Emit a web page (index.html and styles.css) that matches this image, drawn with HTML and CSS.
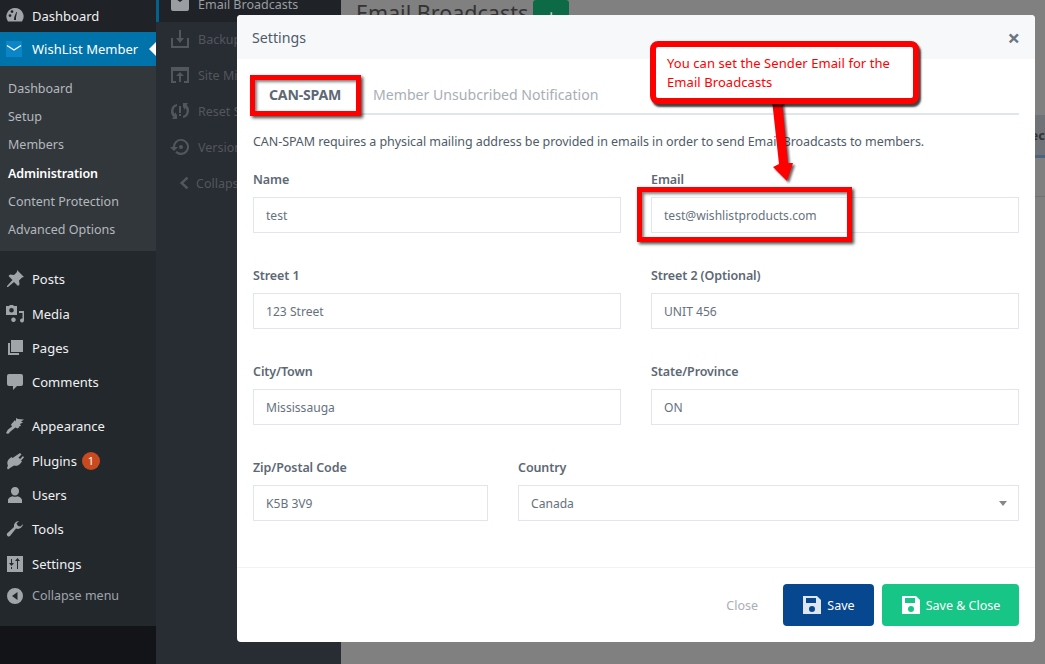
FILE: index.html
```html
<!DOCTYPE html>
<html lang="en">
<head>
    <meta charset="UTF-8">
    <title>Email Broadcasts</title>
    <link rel="stylesheet" href="styles.css">
</head>
<body>
    <div class="admin">
        <nav class="sidebar">
            <div class="menu-top">
                <a class="menu-item"><svg class="menu-icon" viewBox="0 0 20 20"><path d="M10 2a8.500 8.500 0 0 0-7 13.400h14A8.500 8.500 0 0 0 10 2zM5 11a1.400 1.400 0 1 1 0-2.800 1.400 1.400 0 0 1 0 2.800zm2-4a1.400 1.400 0 1 1 0-2.800A1.400 1.400 0 0 1 7 7zm4 7H9l.3-3 2-5 .7.300-1 5z" fill-rule="evenodd"/></svg><span>Dashboard</span></a>
            </div>
            <a class="menu-current"><svg class="wl-icon" viewBox="0 0 16 16"><rect width="16" height="16" fill="#0a86c8"/><path d="M1 4.500l7 4.500 7-4.500" fill="none" stroke="#fff" stroke-width="1.300"/></svg><span>WishList Member</span></a>
            <div class="submenu">
                <a>Dashboard</a>
                <a>Setup</a>
                <a>Members</a>
                <a class="sub-active">Administration</a>
                <a>Content Protection</a>
                <a>Advanced Options</a>
            </div>
            <div class="menu-group">
                <a class="menu-item"><svg class="menu-icon" viewBox="0 0 20 20"><path d="M12 1l7 7-2 .5-3 3 .5 4-1.500 1.500-4-4L3 18l-1 0 0-1 5.500-6-4-4L5 5.500l4 .5 3-3z"/></svg><span>Posts</span></a>
                <a class="menu-item"><svg class="menu-icon" viewBox="0 0 20 20"><path d="M1 2h3l1-1h3l1 1h3v9H1zm5.500 2a2.300 2.300 0 1 0 0 4.600 2.300 2.300 0 0 0 0-4.600zM14 7h5v9.500a2 2 0 1 1-1.500-2V9H14zM8 13.500a2.300 2.300 0 1 1 0 4.500 2.300 2.300 0 0 1 0-4.500z" fill-rule="evenodd"/></svg><span>Media</span></a>
                <a class="menu-item"><svg class="menu-icon" viewBox="0 0 20 20"><path d="M6 2h12v12H6zM3 5h2v10h9v2H3z"/></svg><span>Pages</span></a>
                <a class="menu-item"><svg class="menu-icon" viewBox="0 0 20 20"><path d="M4 2h12a2 2 0 0 1 2 2v8a2 2 0 0 1-2 2h-4l-4 4v-4H4a2 2 0 0 1-2-2V4a2 2 0 0 1 2-2z"/></svg><span>Comments</span></a>
            </div>
            <div class="menu-group menu-group-b">
                <a class="menu-item"><svg class="menu-icon" viewBox="0 0 20 20"><path d="M11 2l2 1 6 .5-3 2 2 1-3 1.500 1 2-5 .5zM10 4l4.500 7-2 1.500-2-1L6 15l-3 3-2-1 2-3.500 4-3-1-2z"/></svg><span>Appearance</span></a>
                <a class="menu-item"><svg class="menu-icon" viewBox="0 0 20 20"><path d="M15 2l1.500 1.500-3 3L15 8l3-3 1 1.500-3 3 1 1-2 2.500c-2 2-4.500 2-6 1.500L5 17l-2 1.500L2 17l1-2.500-.5-1c-.5-2 0-4 1.500-5.500L6.500 6l1 1z"/></svg><span>Plugins</span><span class="badge">1</span></a>
                <a class="menu-item"><svg class="menu-icon" viewBox="0 0 20 20"><path d="M10 2a4 4 0 0 1 4 4.500c0 2-1.800 4-4 4s-4-2-4-4A4 4 0 0 1 10 2zM3 15c0-2 3-3.500 4.500-3.800 1.500.8 3.500.8 5 0C14 11.500 17 13 17 15v3H3z"/></svg><span>Users</span></a>
                <a class="menu-item"><svg class="menu-icon" viewBox="0 0 20 20"><path d="M18 5a5 5 0 0 1-7 4.500L5 17a2 2 0 0 1-3-2.500l7-6.500A5 5 0 0 1 14 2l-2.500 2.500L13 7l2.500.5L18 5z"/></svg><span>Tools</span></a>
                <a class="menu-item"><svg class="menu-icon" viewBox="0 0 20 20"><path d="M2 2h16v16H2zm4 3v4H4l2.500 3L9 9H7V5zm0 8v2h1v-2zm6-6v8h1V7h2l-2.500-3L10 7zm-6 0" fill-rule="evenodd"/></svg><span>Settings</span></a>
                <a class="menu-item menu-collapse"><svg class="menu-icon" viewBox="0 0 20 20"><path d="M10 2a8 8 0 1 1 0 16 8 8 0 0 1 0-16zm2.500 4L7 10l5.500 4z" fill-rule="evenodd"/></svg><span>Collapse menu</span></a>
            </div>
        </nav>

        <aside class="flyout">
            <a class="fly-item fly-current"><svg viewBox="0 0 20 20"><path d="M1 1h18v16a2 2 0 0 1-2 2H3a2 2 0 0 1-2-2zm1 3l8 6 8-6V1H2z" fill-rule="evenodd"/></svg><span>Email Broadcasts</span></a>
            <a class="fly-item"><svg viewBox="0 0 20 20"><path d="M9 1h2v8h3l-4 5-4-5h3zM1 9h2v8h14V9h2v10H1z"/></svg><span>Backup</span></a>
            <a class="fly-item"><svg viewBox="0 0 20 20"><path d="M1 2h18v16h-5v-2h3V6H3v10h3v2H1zm9 5l4 4h-3v6H9v-6H6z"/></svg><span>Site Migration</span></a>
            <a class="fly-item"><svg viewBox="0 0 20 20"><path d="M9 5h2v7H9zm0 8h2v2H9zM1 10a7 7 0 0 1 6-7v2a5 5 0 0 0-2 8.500V11l2 3v4H2l1.500-2A7 7 0 0 1 1 10zm18 0a7 7 0 0 1-6 7v-2a5 5 0 0 0 2-8.500V9l-2-3V2h5l-1.500 2A7 7 0 0 1 19 10z"/></svg><span>Reset Settings</span></a>
            <a class="fly-item"><svg viewBox="0 0 20 20"><path d="M11 2a8 8 0 1 1-5.700 13.600l1.500-1.500A6 6 0 1 0 5 10h3l-4 4-4-4h3a8 8 0 0 1 8-8zm0 6a2 2 0 1 1 0 4 2 2 0 0 1 0-4z"/></svg><span>Version</span></a>
            <a class="fly-item fly-collapse"><svg viewBox="0 0 20 20"><path d="M14 3l2 2-5.500 5 5.500 5-2 2-7.500-7z"/></svg><span>Collapse</span></a>
        </aside>

        <main class="content">
            <div class="page-title"><h2>Email Broadcasts</h2><span class="add-button">+</span></div>
            <div class="table-head"><span>Rec</span></div>
            <div class="table-line"></div>
        </main>
    </div>

    <section class="modal">
        <header class="modal-head">
            <span class="modal-title">Settings</span>
            <span class="modal-close">&times;</span>
        </header>
        <div class="modal-body">
            <div class="tabs">
                <span class="tab tab-on">CAN-SPAM</span>
                <span class="tab">Member Unsubcribed Notification</span>
            </div>
            <p class="intro">CAN-SPAM requires a physical mailing address be provided in emails in order to send Email Broadcasts to members.</p>
            <div class="form-row">
                <div class="field"><label>Name</label><div class="input">test</div></div>
                <div class="field"><label>Email</label><div class="input">test@wishlistproducts.com</div></div>
            </div>
            <div class="form-row">
                <div class="field"><label>Street 1</label><div class="input">123 Street</div></div>
                <div class="field"><label>Street 2 (Optional)</label><div class="input">UNIT 456</div></div>
            </div>
            <div class="form-row">
                <div class="field"><label>City/Town</label><div class="input">Mississauga</div></div>
                <div class="field"><label>State/Province</label><div class="input">ON</div></div>
            </div>
            <div class="form-row form-row-last">
                <div class="field"><label>Zip/Postal Code</label><div class="input">K5B 3V9</div></div>
                <div class="field"><label>Country</label><div class="input input-select">Canada<i class="caret"></i></div></div>
            </div>
        </div>
        <footer class="modal-foot">
            <span class="btn-close">Close</span>
            <span class="btn btn-blue"><svg viewBox="0 0 20 20"><path d="M1 1h14l4 4v14H1zm3 2v5h10V3zm6 8a3 3 0 1 0 0 6 3 3 0 0 0 0-6z" fill="#dfe6f0" fill-rule="evenodd"/></svg>Save</span>
            <span class="btn btn-green"><svg viewBox="0 0 20 20"><path d="M1 1h14l4 4v14H1zm3 2v5h10V3zm6 8a3 3 0 1 0 0 6 3 3 0 0 0 0-6z" fill="#fff" fill-rule="evenodd"/></svg>Save &amp; Close</span>
        </footer>
    </section>

    <!-- red annotations drawn over the screenshot -->
    <div class="mark mark-tab"></div>
    <div class="mark mark-email"></div>
    <svg class="arrow" viewBox="0 0 35 85"><path d="M7 0h10l6 63 5 0-6 18L8 67l6-3z" fill="#f00"/></svg>
    <div class="callout">You can set the Sender Email for the Email Broadcasts</div>
</body>
</html>
```

FILE: styles.css
```css
html, body {
    margin: 0;
    height: 100%;
    overflow: hidden;
}
body {
    font-family: "Noto Sans", sans-serif;
    font-size: 13px;
    background: #808080;
    position: relative;
}
.admin {
    display: flex;
    height: 664px;
}

/* left menu */
.sidebar {
    width: 156px;
    height: 626px;
    background: #23282d;
    box-shadow: 0 38px 0 #121417;
    flex-shrink: 0;
    color: #f0f1f2;
}
.menu-top {
    height: 32px;
    background: #1f2328;
}
.menu-item {
    display: flex;
    align-items: center;
    height: 34.300px;
    padding-left: 5px;
    gap: 7px;
}
.menu-top .menu-item {
    height: 32px;
}
.menu-icon {
    width: 20px;
    height: 20px;
    fill: #a0a5aa;
    flex-shrink: 0;
}
.menu-current {
    display: flex;
    align-items: center;
    height: 34px;
    background: #0073aa;
    color: #fff;
    padding-left: 6px;
    gap: 10px;
    position: relative;
}
.menu-current::after {
    content: "";
    position: absolute;
    right: 0;
    top: 10px;
    border: 7px solid transparent;
    border-right-color: #fff;
    border-left-width: 0;
}
.wl-icon {
    width: 16px;
    height: 16px;
}
.submenu {
    background: #32373c;
    padding: 9px 0 7px;
    color: #b4b9be;
    font-size: 12.500px;
}
.submenu a {
    display: block;
    height: 28.200px;
    line-height: 28px;
    padding-left: 8px;
}
.submenu .sub-active {
    color: #fff;
    font-weight: 600;
    letter-spacing: -.1px;
}
.menu-group {
    padding-top: 11px;
}
.menu-group-b {
    padding-top: 10px;
}
.menu-collapse {
    color: #a0a5aa;
    height: 30px;
    font-size: 12.500px;
}
.badge {
    width: 18px;
    height: 18px;
    margin-left: -2px;
    border-radius: 50%;
    background: #ca4a1f;
    color: #fff;
    font-size: 11px;
    line-height: 18px;
    text-align: center;
}

/* plugin submenu behind the dialog */
.flyout {
    width: 185px;
    background: #282c33;
    flex-shrink: 0;
    color: #53575d;
    font-size: 12.500px;
}
.fly-item {
    display: flex;
    align-items: center;
    gap: 8px;
    height: 36px;
    padding-left: 14px;
    white-space: nowrap;
}
.fly-item svg {
    width: 20px;
    height: 20px;
    fill: #53575d;
    flex-shrink: 0;
}
.fly-current {
    height: 22px;
    margin-bottom: -1px;
    align-items: flex-start;
    background: #1f2328;
    border-left: 3px solid #04618e;
    padding-left: 11px;
    color: #9a9da1;
}
.fly-current svg {
    fill: #9a9da1;
    margin-top: -8px;
}
.fly-current span {
    margin-top: -4px;
}
.fly-collapse {
    padding-left: 18px;
    gap: 4px;
}
.fly-collapse svg {
    width: 18px;
}
.content {
    flex: 1;
    position: relative;
}
.page-title {
    display: flex;
    gap: 5px;
    height: 30px;
    margin-left: 15px;
}
.page-title h2 {
    margin: -2px 0 0;
    font-size: 21.500px;
    line-height: 30px;
    font-weight: 400;
    color: #333;
}
.add-button {
    width: 36px;
    height: 36px;
    background: #0c6b46;
    border-radius: 3px;
    color: #ccc;
    text-align: center;
    line-height: 34px;
    font-size: 20px;
}
.table-head {
    position: absolute;
    left: 15px;
    right: 0;
    top: 115px;
    height: 40px;
    display: flex;
    align-items: center;
    justify-content: flex-end;
    overflow: hidden;
    font-weight: 700;
    color: #333;
    background: #6f7276;
    border-bottom: 3px solid #4d6480;
}
.table-line {
    position: absolute;
    left: 15px;
    right: 0;
    top: 196px;
    height: 1px;
    background: #727272;
}

/* dialog */
.modal {
    position: absolute;
    left: 237px;
    top: 15px;
    width: 798px;
    height: 627px;
    background: #fff;
    border-radius: 4px;
    display: flex;
    flex-direction: column;
    color: #4f5b69;
}
.modal-head {
    height: 44px;
    background: #f7f8fa;
    border-radius: 4px 4px 0 0;
    display: flex;
    align-items: center;
    justify-content: space-between;
    padding: 0 15px;
    flex-shrink: 0;
}
.modal-title {
    font-size: 14.200px;
}
.modal-close {
    font-size: 22px;
    font-weight: 700;
    color: #6c7683;
}
.modal-body {
    flex: 1;
    padding: 15px 16px 0;
}
.tabs {
    display: flex;
    height: 39px;
    border-bottom: 2px solid #dfe6f0;
    align-items: center;
}
.tab {
    padding: 1px 16px 0;
    font-size: 14.100px;
    color: #a9aeb5;
}
.tab-on {
    font-weight: 700;
    letter-spacing: -.2px;
    color: #5d6875;
}
.intro {
    margin: 17px 0 0 0;
    height: 37px;
    font-size: 12.500px;
    letter-spacing: -.07px;
    line-height: 20px;
    color: #4f5b69;
}
.form-row {
    display: grid;
    grid-template-columns: 1fr 1fr;
    column-gap: 30px;
    height: 96px;
}
.form-row-last {
    grid-template-columns: 235px 1fr;
}
.field label {
    display: block;
    font-size: 12.500px;
    font-weight: 600;
    letter-spacing: -.1px;
    height: 20px;
    line-height: 22px;
    margin-bottom: 8px;
    color: #5d6875;
}
.input {
    height: 36px;
    box-sizing: border-box;
    border: 1px solid #dfe6f0;
    padding: 0 12px;
    font-size: 12.100px;
    line-height: 36px;
    color: #66717e;
    position: relative;
}
.caret {
    position: absolute;
    right: 11px;
    top: 15px;
    border: 4px solid transparent;
    border-top: 5px solid #888;
    border-bottom: 0;
}
.modal-foot {
    height: 74px;
    border-top: 1px solid #f0f2f5;
    display: flex;
    align-items: center;
    justify-content: flex-end;
    padding: 0 16px;
    gap: 8px;
    font-size: 12.500px;
}
.btn-close {
    color: #a9aeb5;
    margin-right: 17px;
}
.btn {
    height: 42px;
    border-radius: 4px;
    display: flex;
    align-items: center;
    justify-content: center;
    color: #fff;
    gap: 5px;
}
.btn svg {
    width: 20px;
    height: 20px;
}
.btn-blue {
    width: 91px;
    background: #06478f;
}
.btn-green {
    width: 137px;
    background: #17c586;
}

/* annotations */
.mark {
    position: absolute;
    border: 5px solid #f00;
    box-shadow: 2px 2px 3px rgba(0, 0, 0, .7), inset 2px 2px 3px rgba(0, 0, 0, .5);
    box-sizing: border-box;
}
.mark-tab {
    left: 250px;
    top: 75px;
    width: 111px;
    height: 41px;
}
.mark-email {
    left: 637px;
    top: 187px;
    width: 215px;
    height: 55px;
}
.callout {
    position: absolute;
    left: 650px;
    top: 41px;
    width: 269px;
    height: 63px;
    box-sizing: border-box;
    border: 6px solid #f00;
    border-radius: 8px;
    background: #fff;
    color: #f00;
    padding: 7px 11px;
    font-size: 13px;
    letter-spacing: .07px;
    line-height: 19px;
    box-shadow: 2px 3px 2px rgba(0, 0, 0, .75);
}
.arrow {
    position: absolute;
    left: 765px;
    top: 100px;
    width: 35px;
    height: 85px;
    filter: drop-shadow(2px 2px 1px rgba(0, 0, 0, .6));
}
```
